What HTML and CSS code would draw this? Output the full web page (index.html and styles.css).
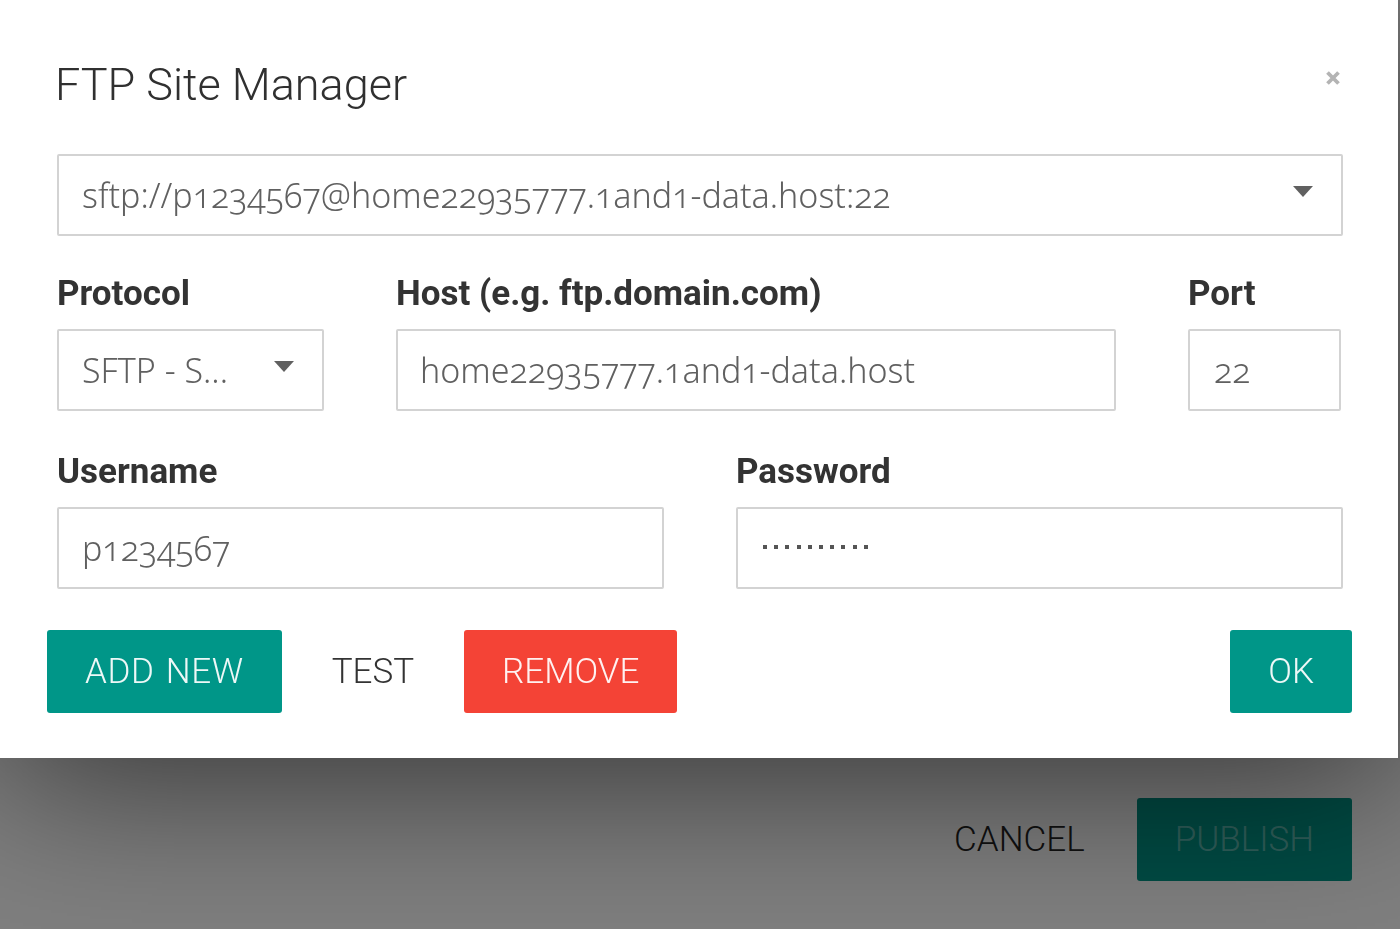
FILE: index.html
```html
<!DOCTYPE html>
<html lang="en">
<head>
<meta charset="utf-8">
<title>FTP Site Manager</title>
<link rel="stylesheet" href="styles.css">
</head>
<body>
<div class="page">
  <div class="page-footer">
    <button class="btn btn-flat btn-under">CANCEL</button>
    <button class="btn btn-teal btn-dim">PUBLISH</button>
  </div>
</div>
<div class="overlay"></div>
<div class="modal">
  <div class="modal-header">
    <h1 class="modal-title">FTP Site Manager</h1>
    <span class="close" aria-label="Close"><svg width="16" height="16" viewBox="0 0 16 16"><path d="M2.5 2.5L13.5 13.5M13.5 2.5L2.5 13.5" stroke="#b4b4b4" stroke-width="3.8" fill="none"/></svg></span>
  </div>
  <div class="box select select-wide">
    <span class="value">sftp://p1234567@home22935777.1and1-data.host:22</span>
    <span class="caret"></span>
  </div>
  <div class="grid3">
    <div class="field">
      <label class="label">Protocol</label>
      <div class="box select"><span class="value">SFTP - S...</span><span class="caret"></span></div>
    </div>
    <div class="field">
      <label class="label">Host (e.g. ftp.domain.com)</label>
      <div class="box box-host"><span class="value">home22935777.1and1-data.host</span></div>
    </div>
    <div class="field">
      <label class="label">Port</label>
      <div class="box box-port"><span class="value">22</span></div>
    </div>
  </div>
  <div class="grid2">
    <div class="field">
      <label class="label">Username</label>
      <div class="box"><span class="value">p1234567</span></div>
    </div>
    <div class="field">
      <label class="label">Password</label>
      <div class="box box-pass"><span class="dots"><i></i><i></i><i></i><i></i><i></i><i></i><i></i><i></i><i></i><i></i></span></div>
    </div>
  </div>
  <div class="actions">
    <div class="actions-left">
      <button class="btn btn-teal btn-add">ADD NEW</button>
      <button class="btn btn-flat">TEST</button>
      <button class="btn btn-red">REMOVE</button>
    </div>
    <button class="btn btn-teal">OK</button>
  </div>
</div>
</body>
</html>
```
FILE: styles.css
```css
html, body {
  margin: 0;
  padding: 0;
}
body {
  width: 1400px;
  height: 929px;
  overflow: hidden;
  background: #fff;
  font-family: Roboto, "Liberation Sans", sans-serif;
}
.page {
  height: 929px;
  display: flex;
  flex-direction: column;
  justify-content: flex-end;
}
.page-footer {
  display: flex;
  justify-content: flex-end;
  gap: 14px;
  padding: 0 48px 48px 0;
}
.btn {
  height: 83px;
  padding: 0 38px;
  border: 0;
  border-radius: 3px;
  background: transparent;
  font-family: Roboto, "Liberation Sans", sans-serif;
  font-weight: 300;
  font-size: 35px;
  line-height: 83px;
  text-transform: uppercase;
  white-space: nowrap;
  cursor: pointer;
}
.btn-add {
  letter-spacing: 0.6px;
  word-spacing: 2px;
}
.btn-flat {
  color: #333;
}
.btn-under {
  color: #222;
}
.btn-teal {
  background: #009688;
  color: rgba(255, 255, 255, 0.93);
}
.btn-red {
  background: #f44336;
  color: rgba(255, 255, 255, 0.93);
}
.btn-dim {
  color: rgba(255, 255, 255, 0.4);
}
.overlay {
  position: fixed;
  inset: 0;
  background: rgba(0, 0, 0, 0.5);
}
.modal {
  position: fixed;
  top: 0;
  left: 0;
  width: 1398px;
  height: 758px;
  box-sizing: border-box;
  padding: 60px 55px 0 57px;
  background: #fff;
  box-shadow: 0 20px 160px rgba(0, 0, 0, 0.6);
}
.modal-header {
  display: flex;
  justify-content: space-between;
  align-items: flex-start;
  height: 50px;
  margin-bottom: 44px;
}
.modal-title {
  margin: 0 0 0 -2px;
  font-family: Roboto, "Liberation Sans", sans-serif;
  font-weight: 300;
  font-size: 45px;
  line-height: 50px;
  color: #303030;
}
.close {
  display: block;
  width: 16px;
  height: 16px;
  margin-top: 10px;
  margin-right: 2px;
}
.close svg {
  display: block;
}
.box {
  height: 82px;
  box-sizing: border-box;
  border: 2px solid #d3d3d3;
  border-radius: 2px;
  display: flex;
  align-items: center;
  padding: 0 23px;
  font-family: "Noto Sans", "Open Sans", sans-serif;
  font-weight: 300;
  font-size: 34px;
  color: #606060;
  font-variant-numeric: oldstyle-nums;
  font-feature-settings: "onum" 1;
  white-space: nowrap;
  overflow: hidden;
}
.select {
  justify-content: space-between;
  padding-right: 28px;
}
.select-wide {
  margin-bottom: 38px;
}
.caret {
  width: 0;
  height: 0;
  border-left: 10px solid transparent;
  border-right: 10px solid transparent;
  border-top: 11px solid #606060;
  margin-top: -7px;
}
.box-host {
  padding-left: 22px;
}
.box-port {
  padding-left: 24px;
}
.box-pass {
  padding-left: 25px;
}
.dots {
  display: flex;
  gap: 7.2px;
  margin-top: -3px;
}
.dots i {
  display: block;
  width: 4px;
  height: 4px;
  background: #555;
}
.label {
  display: block;
  margin-bottom: 15px;
  font-family: Roboto, "Liberation Sans", sans-serif;
  font-weight: 700;
  font-size: 35px;
  line-height: 40px;
  color: #333;
}
.grid3 {
  display: grid;
  grid-template-columns: 267px 720px 153px;
  column-gap: 72px;
  margin-bottom: 41px;
}
.grid2 {
  display: grid;
  grid-template-columns: 1fr 1fr;
  column-gap: 72px;
  margin-bottom: 41px;
}
.actions {
  display: flex;
  justify-content: space-between;
  margin: 0 -9px 0 -10px;
}
.actions-left {
  display: flex;
  gap: 12px;
}
```
